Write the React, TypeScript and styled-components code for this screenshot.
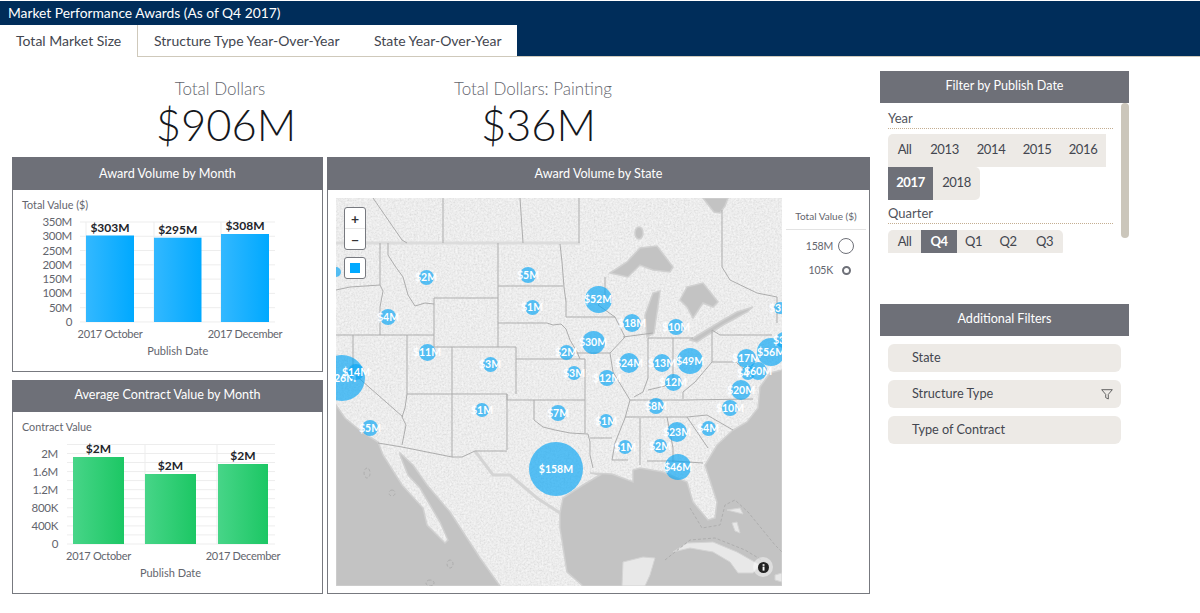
import React from 'react';
import styled, { createGlobalStyle } from 'styled-components';

const FONT = `Lato, "Open Sans", "Liberation Sans", sans-serif`;
const GREY = '#6e7078';
const CHIP = '#edeae6';
const INK = '#43464f';

const Global = createGlobalStyle`
  html, body { margin: 0; padding: 0; background: #fff; }
  body { font-family: ${FONT}; color: ${INK}; overflow: hidden; }
`;

const Page = styled.div`width: 1200px; height: 613px; overflow: hidden; background: #fff;`;
const TitleBar = styled.header`
  height: 24px; margin-top: 1px; background: #002d5a; color: #fff; font-size: 13.8px;
  line-height: 24px; padding-left: 8px;
`;
const TabBar = styled.nav`
  display: flex; height: 31px; background: #002d5a; border-bottom: 1px solid #cfc9bb;
`;
const Tab = styled.div<{ $active?: boolean; $w: number; $pad: number }>`
  box-sizing: border-box; width: ${p => p.$w}px; padding-left: ${p => p.$pad}px;
  height: ${p => (p.$active ? 32 : 31)}px; line-height: 32px; font-size: 14px; color: ${INK};
  background: #fff; white-space: nowrap;
  border-right: ${p => (p.$active ? '1px solid #cfc9bb' : '0')};
  position: relative; z-index: 1;
`;
const Content = styled.main`
  display: grid; grid-template-columns: 858px 249px; column-gap: 10px; padding-left: 12px;
`;
const Kpis = styled.section`display: grid; grid-template-columns: 416px 210px; height: 100px;`;
const Kpi = styled.div`display: flex; flex-direction: column; align-items: center; padding-top: 22px;`;
const KpiLabel = styled.div`font-size: 17px; font-weight: 300; color: #63656d; line-height: 20px;`;
const KpiValue = styled.div<{ $shift: number }>`
  font-size: 43.5px; line-height: 50px; font-weight: 300; color: #15171c; padding-left: ${p => p.$shift}px;
`;
const Boards = styled.section`display: grid; grid-template-columns: 311px 543px; column-gap: 4px;`;
const Stack = styled.div`display: flex; flex-direction: column; gap: 8px;`;
const Panel = styled.article<{ $h: number }>`
  height: ${p => p.$h}px; border: 1px solid #77797f; border-top: 0; box-sizing: border-box;
  display: flex; flex-direction: column;
`;
const PanelHead = styled.h2<{ $tight?: boolean; $out?: boolean }>`
  margin: ${p => (p.$out ? '0' : '0 -1px')}; height: ${p => (p.$tight ? 32 : 33)}px; line-height: ${p => (p.$tight ? 30 : 33)}px; background: ${GREY}; color: #fff; font-size: 12.6px;
  font-weight: 400; text-align: center; flex: none;
`;
const ChartSvg = styled.svg`display: block; flex: 1;`;
const AxisText = styled.text<{ $size?: number; $track?: number }>`font-size: ${p => p.$size ?? 11}px; letter-spacing: ${p => p.$track ?? -0.3}px; fill: #63656d; font-family: ${FONT};`;
const BarText = styled.text`font-size: 12px; font-weight: 700; fill: #22242a; font-family: ${FONT};`;

const MapBody = styled.div`display: flex; padding: 8px 0 0 8px; gap: 4px;`;
const MapBox = styled.div`position: relative; width: 446px; height: 388px; overflow: hidden; flex: none; background: #c3c3c3;`;
const MapArt = styled.svg`position: absolute; inset: 0; display: block;`;
const Bubble = styled.div`
  position: absolute; border-radius: 50%; background: rgba(12, 167, 245, .68); color: #fff;
  font-size: 10.5px; font-weight: 700; display: flex; align-items: center; justify-content: center; white-space: nowrap;
`;
const Controls = styled.div<{ $top: number }>`
  position: absolute; left: 8px; top: ${p => p.$top}px; width: 20px; background: #fff; border: 1px solid #77797f; border-radius: 3px;
  display: flex; flex-direction: column;
`;
const ZoomBtn = styled.div`
  height: 20px; display: flex; align-items: center; justify-content: center; font-weight: 700; color: #333; font-size: 14px;
  & + & { border-top: 1px solid #e6e6e6; }
`;
const Square = styled.div`width: 10px; height: 10px; margin: 5px; background: #00a9ff;`;
const InfoHalo = styled.div`
  position: absolute; right: 9px; bottom: 9px; width: 20px; height: 20px; border-radius: 50%;
  background: rgba(255,255,255,.45); display: flex; align-items: center; justify-content: center;
`;
const Legend = styled.aside`width: 80px; flex: none;`;
const LegendTitle = styled.div`
  font-size: 10px; color: #63656d; text-align: center; height: 31px; line-height: 36px; border-bottom: 1px solid #e3e3e3;
`;
const LegendRow = styled.div<{ $h: number }>`
  display: flex; align-items: center; justify-content: flex-end; height: ${p => p.$h}px; font-size: 10.5px; letter-spacing: -.2px; color: #63656d;
`;
const LegendMark = styled.span`width: 26px; display: flex; justify-content: center; margin-right: 7px;`;
const Ring = styled.i<{ $d: number; $w: number }>`
  display: block; box-sizing: border-box; width: ${p => p.$d}px; height: ${p => p.$d}px; border-radius: 50%; border: ${p => p.$w}px solid ${GREY};
`;

const Side = styled.aside`padding-top: 14px; display: flex; flex-direction: column;`;
const Scroller = styled.div`position: relative; height: 150px; overflow: hidden;`;
const Thumb = styled.div`position: absolute; right: 0; top: 0; width: 8px; height: 135px; border-radius: 4px; background: #cbc6bb;`;
const FilterGroup = styled.div`padding: 0 16px 0 8px;`;
const GroupLabel = styled.div`
  font-size: 13px; color: #50535b; height: 25px; line-height: 30px; border-bottom: 1px dotted #c4ae91; box-sizing: content-box;
`;
const ChipRow = styled.div<{ $after?: number; $before?: number }>`
  display: flex; flex-wrap: wrap; margin: ${p => p.$before ?? 5}px 7px ${p => p.$after ?? 0}px 0;
`;
const Chip = styled.div<{ $on?: boolean; $w: number; $first?: boolean; $last?: boolean; $tall?: number }>`
  width: ${p => p.$w}px; height: ${p => p.$tall ?? 33}px; line-height: ${p => (p.$tall ?? 33) - 3}px; text-align: center; font-size: 13px; letter-spacing: -.4px;
  background: ${p => (p.$on ? GREY : CHIP)}; color: ${p => (p.$on ? '#fff' : INK)}; font-weight: ${p => (p.$on ? 700 : 400)};
  border-radius: ${p => (p.$first ? '5px 0 0 0' : p.$last ? '0 5px 5px 0' : '0')};
`;
const AddFilters = styled.div`margin-top: 51px;`;
const FilterList = styled.div`display: flex; flex-direction: column; gap: 8px; padding: 8px 8px 0;`;
const FilterItem = styled.div`
  height: 28px; border-radius: 6px; background: ${CHIP}; display: flex; align-items: center; justify-content: space-between;
  box-sizing: border-box; padding: 0 8px 2px 24px; font-size: 12.7px; color: ${INK};
`;
const Funnel = styled.svg`margin-top: 2px;`;

type Bar = { x: number; w: number; top: number; label: string; ly: number };

function Chart(props: {
  title: string; ticks: { t: string; y: number }[]; axisX: number; gridX: number; minor?: number[]; bars: Bar[]; base: number; catY: number; dateY: number;
  verts: number[]; gradId: string; from: string; to: string; top: number; titleY: number;
}) {
  const { title, ticks, axisX, gridX, minor = [], bars, base, catY, dateY, verts, gradId, from, to, top, titleY } = props;
  return (
    <ChartSvg viewBox={`13 ${top} 309 181`} width={309} height={181}>
      <defs>
        <linearGradient id={gradId} x1="0" x2="1" y1="0" y2="0">
          <stop offset="0" stopColor={from} /><stop offset="1" stopColor={to} />
        </linearGradient>
      </defs>
      <AxisText x={22} y={titleY} $size={10.8} $track={0}>{title}</AxisText>
      {[...ticks.map(t => t.y), ...minor].map(y => <line key={y} x1={gridX} x2={275} y1={y} y2={y} stroke="#ededed" />)}
      {verts.map(x => <line key={x} x1={x} x2={x} y1={ticks[0].y - (minor.length ? 9 : 0)} y2={base} stroke="#ededed" />)}
      {ticks.map(t => <AxisText key={t.t} x={axisX} y={t.y + 4} textAnchor="end" $size={11.5}>{t.t}</AxisText>)}
      {bars.map(b => (
        <g key={b.x}>
          <rect x={b.x} y={b.top} width={b.w} height={base - b.top} fill={`url(#${gradId})`} />
          <BarText x={b.x + b.w / 2} y={b.ly} textAnchor="middle">{b.label}</BarText>
        </g>
      ))}
      <AxisText x={bars[0].x + bars[0].w / 2} y={catY} textAnchor="middle">2017 October</AxisText>
      <AxisText x={bars[2].x + bars[2].w / 2} y={catY} textAnchor="middle">2017 December</AxisText>
      <AxisText x={bars[1].x + bars[1].w / 2} y={dateY} textAnchor="middle" $track={0}>Publish Date</AxisText>
    </ChartSvg>
  );
}

const bubbles: [number, number, number, string][] = [
  [342, 378, 23, '$26M'], [356, 372, 8, '$14M'], [336, 272, 5, ''], [426, 277, 7.5, '$2M'], [528, 275, 8, '$5M'], [532, 307, 7.5, '$1M'],
  [388, 317, 8, '$4M'], [427, 352, 8.5, '$11M'], [490, 364, 7.5, '$3M'], [566, 352, 7.5, '$2M'], [574, 373, 7, '$3M'], [593, 342, 11.5, '$30M'],
  [598, 299, 13.5, '$52M'], [632, 323, 9, '$18M'], [676, 327, 8, '$10M'], [629, 363, 10, '$24M'], [607, 378, 8, '$12M'], [662, 363, 9, '$13M'],
  [690, 361, 13, '$49M'], [673, 382, 8.5, '$12M'], [748, 373, 7, '$4M'], [746, 358, 9.5, '$17M'], [758, 371, 9, '$60M'], [771, 352, 14, '$56M'], [780, 308, 6, '$3M'], [784, 340, 8, '$3M'],
  [741, 390, 10, '$20M'], [730, 408, 8, '$10M'], [656, 406, 8, '$8M'], [558, 413, 8, '$7M'], [482, 410, 7, '$1M'], [370, 428, 8, '$5M'],
  [556, 469, 27, '$158M'], [606, 421, 7, '$1M'], [625, 447, 7, '$1M'], [660, 446, 7, '$2M'], [677, 432, 10, '$23M'], [708, 428, 7.5, '$4M'], [678, 467, 13, '$46M'],
];

const statePaths = [
  'M498 243V347', 'M498 286H563', 'M560 244L562 262L564 287L566 302V317', 'M498 323H547L553 325L561 324L566 329L570 340L577 352L580 359',
  'M434 298H498', 'M434 298V347H516V394', 'M516 359H585V433', 'M388 243V255L395 266L403 277L408 295L415 306L425 303L434 304', 'M380 243V285L383 291L380 307V335',
  'M336 290L350 287L380 285', 'M336 335H434', 'M407 335V394', 'M353 335V373L403 417', 'M407 394L405 408L402 417L406 425L402 445',
  'M378 443L402 447L452 457', 'M452 347V457H462L475 451H507', 'M407 394H507V400H585', 'M507 394V450', 'M534 400V420L543 427L555 430L570 433L588 434',
  'M588 434L590 442V455L593 468', 'M590 438H612', 'M630 400L625 418L615 443L612 460H628', 'M640 418V465', 'M625 417H667L673 448V462', 'M647 461H673L703 463', 'M667 417H687L708 448',
  'M687 417L707 415L733 430', 'M630 400H683L753 399', 'M566 317H615', 'M605 277V298L598 305L615 317L625 337L610 353L613 372L630 400', 'M566 353H610',
  'M623 337L653 333', 'M648 338V378L643 392L634 397', 'M673 338V378', 'M648 338L693 338', 'M673 378L665 386L648 390', 'M712 330V362L695 382L683 392L683 399', 'M712 330L720 335H772', 'M712 362H737',
  'M722 210V267L730 280L757 293L777 297V323', 'M737 363L745 370', 'M373 198L402 240L407 243', 'M579 198V243', 'M520 198L523 243', 'M443 198V243',
];

export default function App() {
  const barsA: Bar[] = [
    { x: 86, w: 48, top: 235.5, label: '$303M', ly: 232 },
    { x: 154, w: 47.5, top: 237.7, label: '$295M', ly: 234 },
    { x: 221, w: 48, top: 234, label: '$308M', ly: 230 },
  ];
  const barsB: Bar[] = [
    { x: 73, w: 51, top: 457, label: '$2M', ly: 453 },
    { x: 145, w: 51, top: 474, label: '$2M', ly: 470 },
    { x: 218, w: 50, top: 464, label: '$2M', ly: 460 },
  ];
  return (
    <Page>
      <Global />
      <TitleBar>Market Performance Awards (As of Q4 2017)</TitleBar>
      <TabBar>
        <Tab $active $w={138} $pad={16}>Total Market Size</Tab>
        <Tab $w={219} $pad={16}>Structure Type Year-Over-Year</Tab>
        <Tab $w={160} $pad={17}>State Year-Over-Year</Tab>
      </TabBar>
      <Content>
        <div>
          <Kpis>
            <Kpi><KpiLabel>Total Dollars</KpiLabel><KpiValue $shift={12}>$906M</KpiValue></Kpi>
            <Kpi><KpiLabel>Total Dollars: Painting</KpiLabel><KpiValue $shift={11}>$36M</KpiValue></Kpi>
          </Kpis>
          <Boards>
            <Stack>
              <Panel $h={215}>
                <PanelHead>Award Volume by Month</PanelHead>
                <Chart title="Total Value ($)" top={190} titleY={209} axisX={72} gridX={80} base={322}
                  ticks={['350M', '300M', '250M', '200M', '150M', '100M', '50M', '0'].map((t, i) => ({ t, y: 222 + i * 14.28 }))}
                  bars={barsA} catY={338} dateY={355} verts={[86, 154, 221]} gradId="blue" from="#33b8ff" to="#00a9ff" />
              </Panel>
              <Panel $h={214}>
                <PanelHead $tight>Average Contract Value by Month</PanelHead>
                <Chart title="Contract Value" top={412} titleY={431} axisX={58} gridX={67} base={544}
                  ticks={['2M', '1.6M', '1.2M', '800K', '400K', '0'].map((t, i) => ({ t, y: 453.5 + i * 18.1 }))}
                  minor={[444.5, 462.5, 480.6, 498.7, 516.8, 534.9]}
                  bars={barsB} catY={560} dateY={577} verts={[145, 217]} gradId="green" from="#47d588" to="#1cc764" />
              </Panel>
            </Stack>
            <Panel $h={437}>
              <PanelHead>Award Volume by State</PanelHead>
              <MapBody>
                <MapBox>
                  <MapArt viewBox="336 198 446 388" width={446} height={388}>
                    <defs>
                      <filter id="grain" x="0" y="0" width="100%" height="100%">
                        <feTurbulence type="fractalNoise" baseFrequency="0.5" numOctaves="3" seed="4" />
                        <feColorMatrix type="matrix" values="0 0 0 0 1  0 0 0 0 1  0 0 0 0 1  1.2 0 0 0 -0.3" />
                      </filter>
                      <filter id="pits" x="0" y="0" width="100%" height="100%">
                        <feTurbulence type="fractalNoise" baseFrequency="0.7" numOctaves="2" seed="11" />
                        <feColorMatrix type="matrix" values="0 0 0 0 .5  0 0 0 0 .5  0 0 0 0 .5  0 .8 0 0 -0.4" />
                      </filter>
                    </defs>
                    <rect x="336" y="198" width="446" height="388" fill="#e6e6e6" />
                    <rect x="336" y="198" width="446" height="388" filter="url(#grain)" />
                    <rect x="336" y="198" width="446" height="388" filter="url(#pits)" />
                    <g fill="#c3c3c3" stroke="#d0d0d0" strokeWidth="1.5">
                      <path d="M336 405L345 418L362 432L378 442L383 455L402 485L423 508L427 525L445 543L448 540L440 522L420 488L408 475L400 455L400 453L413 465L427 485L450 512L480 558L500 586H336Z" />
                      <path d="M600 475L583 485L563 498L560 513L560 528L567 572L583 586H782V370L770 373L760 387L758 408L747 422L733 430L717 445L705 465L717 502L715 518L708 520L693 502L687 482L663 472L640 468L633 470L633 482L612 474L590 473Z" />
                      <path d="M703 198H728L725 206L720 213L714 212L710 207Z" />
                      <path d="M610 273L627 262L640 248L657 246L673 267L670 272L653 270L640 265L628 277Z" />
                      <path d="M647 337L645 315L653 293L660 291L654 333Z" />
                      <path d="M687 287L703 283L718 302L713 307L703 303L693 318L687 307L680 300Z" />
                      <path d="M690 340L723 320L737 312L753 307L747 312L723 325L697 342Z" />
                      <ellipse cx="639" cy="233" rx="4" ry="6" />
                    </g>
                    <g fill="#e8e8e8" stroke="#d4d4d4">
                      <path d="M673 552L687 543L713 542L737 552L760 565L753 573L738 573L730 562L713 552L690 548Z" />
                      <path d="M622 586L623 562L643 557L655 558L650 575L645 586Z" />
                      <path d="M732 523L737 522L740 533L735 531Z" />
                      <path d="M727 510L740 508L743 514Z" />
                      <path d="M775 575L782 573V582L775 580Z" />
                    </g>
                    <g fill="none" stroke="#aeaeae" strokeWidth="1" strokeDasharray="3 2">
                      <path d="M690 508L702 528L720 525L725 505L735 500L748 512L775 545L782 552" />
                      <path d="M665 560L690 540L715 538L745 550L770 565" />
                      <path d="M367 468a3 5 0 1 0 .1 0M392 490a3 3 0 1 0 .1 0" />
                      <path d="M450 560a3 4 0 1 0 .1 0M430 580a4 3 0 1 0 .1 0" />
                    </g>
                    <path d="M336 243H580" stroke="#dcdcdc" strokeWidth="3" fill="none" />
                    <path d="M475 451L493 475L510 475L537 498L560 513" stroke="#d4d4d4" strokeWidth="3" fill="none" />
                    {statePaths.map(d => <path key={d} d={d} fill="none" stroke="#adadad" strokeWidth="1" />)}
                  </MapArt>
                  {bubbles.map(([x, y, r, label], i) => (
                    <Bubble key={i} style={{ left: x - 336 - r, top: y - 198 - r, width: r * 2, height: r * 2 }}>{label}</Bubble>
                  ))}
                  <Controls $top={9}>
                    <ZoomBtn>+</ZoomBtn>
                    <ZoomBtn>−</ZoomBtn>
                  </Controls>
                  <Controls $top={59}><Square /></Controls>
                  <InfoHalo>
                    <svg width="11" height="11" viewBox="0 0 11 11">
                      <circle cx="5.5" cy="5.5" r="5.5" fill="#222" />
                      <rect x="4.6" y="4.6" width="1.9" height="4" fill="#fff" />
                      <rect x="4.6" y="2.2" width="1.9" height="1.6" fill="#fff" />
                    </svg>
                  </InfoHalo>
                </MapBox>
                <Legend>
                  <LegendTitle>Total Value ($)</LegendTitle>
                  <LegendRow $h={32}>158M<LegendMark><Ring $d={16} $w={1.6} /></LegendMark></LegendRow>
                  <LegendRow $h={16}>105K<LegendMark><Ring $d={9} $w={2} /></LegendMark></LegendRow>
                </Legend>
              </MapBody>
            </Panel>
          </Boards>
        </div>
        <Side>
          <PanelHead $out $tight>Filter by Publish Date</PanelHead>
          <Scroller>
            <Thumb />
            <FilterGroup>
              <GroupLabel>Year</GroupLabel>
              <ChipRow $after={-2}>
                <Chip $w={33} $first>All</Chip>
                <Chip $w={47}>2013</Chip><Chip $w={46}>2014</Chip><Chip $w={46}>2015</Chip><Chip $w={46}>2016</Chip>
                <Chip $w={45} $on>2017</Chip><Chip $w={47} $last>2018</Chip>
              </ChipRow>
              <GroupLabel>Quarter</GroupLabel>
              <ChipRow $before={6}>
                <Chip $w={33} $first $tall={26}>All</Chip>
                <Chip $w={36} $on $tall={26}>Q4</Chip>
                <Chip $w={33} $tall={26}>Q1</Chip><Chip $w={36} $tall={26}>Q2</Chip><Chip $w={37} $last $tall={26}>Q3</Chip>
              </ChipRow>
            </FilterGroup>
          </Scroller>
          <AddFilters>
            <PanelHead $out $tight>Additional Filters</PanelHead>
            <FilterList>
              <FilterItem>State</FilterItem>
              <FilterItem>
                Structure Type
                <Funnel width="12" height="11" viewBox="0 0 12 11"><path d="M.7.7H11.3L7.3 5.4V10L4.7 8.6V5.4Z" fill="none" stroke="#555" strokeWidth=".9" /></Funnel>
              </FilterItem>
              <FilterItem>Type of Contract</FilterItem>
            </FilterList>
          </AddFilters>
        </Side>
      </Content>
    </Page>
  );
}
